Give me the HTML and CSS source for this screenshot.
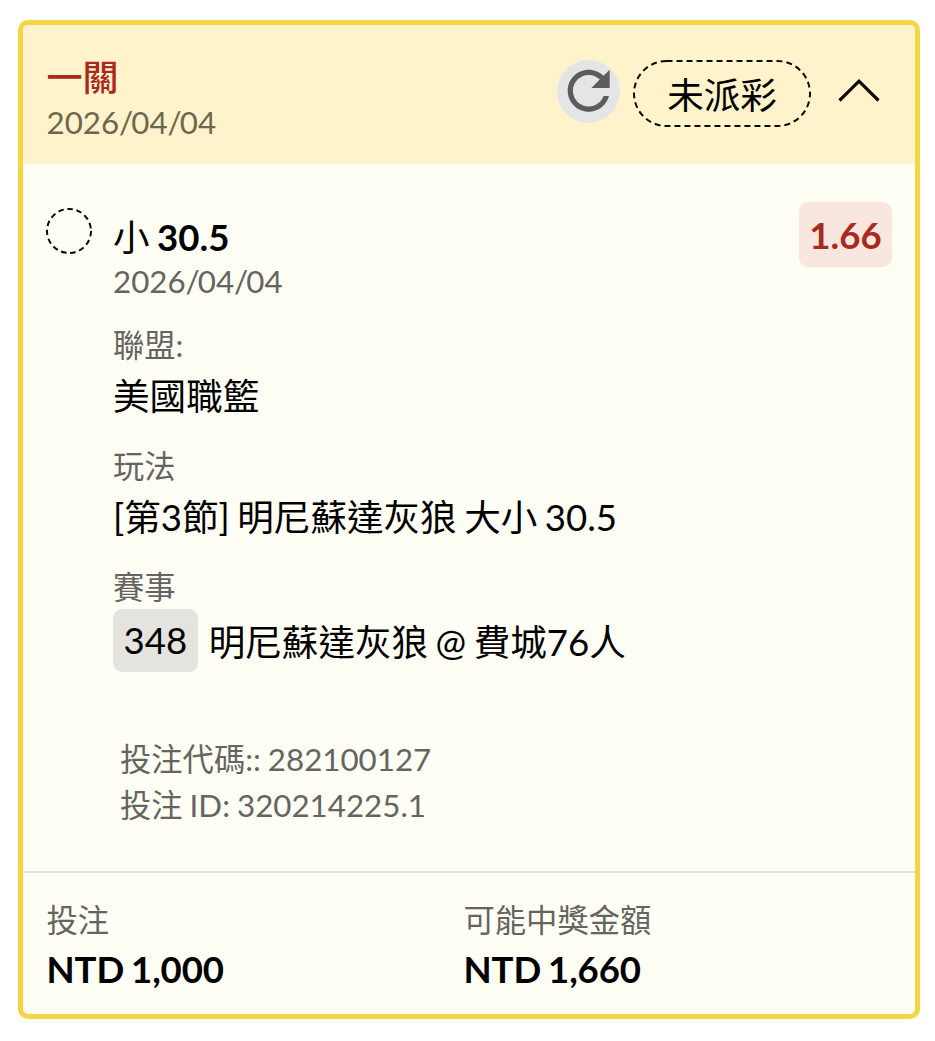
FILE: index.html
```html
<!DOCTYPE html>
<html lang="zh-Hant">
<head>
<meta charset="utf-8">
<title>一關</title>
<link rel="stylesheet" href="styles.css">
</head>
<body>
<article class="ticket">
  <header class="head">
    <div class="head-text">
      <h1 class="title">一關</h1>
      <div class="small">2026<i>/</i>04<i>/</i>04</div>
    </div>
    <button class="refresh" aria-label="refresh">
      <svg width="63" height="63" viewBox="0 0 63 63"><path transform="translate(.2 -.8) scale(2.625)" d="M17.65 6.35C16.2 4.9 14.21 4 12 4c-4.420 0-7.990 3.580-7.990 8s3.570 8 7.990 8c3.730 0 6.840-2.550 7.730-6h-2.080c-.82 2.330-3.040 4-5.650 4-3.310 0-6-2.690-6-6s2.690-6 6-6c1.660 0 3.140.69 4.220 1.780L13 11h7V4l-2.350 2.350z" fill="#5c5c5c"/></svg>
    </button>
    <div class="status">
      <svg class="dash" width="178" height="67" viewBox="0 0 178 67"><rect x="1" y="1" width="176" height="65" rx="32.500"/></svg>
      <span>未派彩</span>
    </div>
    <svg class="chevron" width="42" height="26" viewBox="0 0 42 26"><path d="M1.500 23.500L21 4.200L40.500 23.500" fill="none" stroke="#0c0a05" stroke-width="3.2"/></svg>
  </header>
  <section class="body">
    <svg class="ring" width="46" height="46" viewBox="0 0 46 46"><circle cx="23" cy="23" r="22"/></svg>
    <div class="details">
      <div class="pick">小 <b>30.5</b></div>
      <div class="small">2026<i>/</i>04<i>/</i>04</div>
      <dl class="facts">
        <div class="fact"><dt class="small">聯盟:</dt><dd class="value">美國職籃</dd></div>
        <div class="fact"><dt class="small">玩法</dt><dd class="value">[第3節] 明尼蘇達灰狼 大小 30.5</dd></div>
        <div class="fact"><dt class="small">賽事</dt><dd class="match"><span class="chip">348</span><span class="teams">明尼蘇達灰狼 @ 費城76人</span></dd></div>
      </dl>
      <div class="codes small">
        <div>投注代碼:: 282100127</div>
        <div>投注 ID: 320214225.1</div>
      </div>
    </div>
    <div class="odds">1.66</div>
  </section>
  <footer class="foot">
    <div><div class="small">投注</div><div class="amount">NTD 1,000</div></div>
    <div><div class="small">可能中獎金額</div><div class="amount">NTD 1,660</div></div>
  </footer>
</article>
</body>
</html>
```
FILE: styles.css
```css
* { box-sizing: border-box; }
body {
  margin: 0;
  padding: 20px 15px 22px 18px;
  background: #fff;
  color: #000;
  font-family: Lato, "Noto Sans CJK TC", sans-serif;
  font-size: 36.6px;
  word-spacing: -1.9px;
  white-space: nowrap;
}
.ticket {
  height: 999px;
  border: 5px solid #f4d644;
  border-radius: 10px;
  background: #fffef5;
  overflow: hidden;
}
.head {
  display: flex;
  align-items: flex-start;
  height: 139px;
  padding: 30px 35px 0 23.5px;
  background: #fff3cb;
}
.head-text { flex: 1; }
.title {
  margin: 0;
  color: #a82a1c;
  font-size: 36px;
  font-weight: 500;
  line-height: 44px;
}
.small {
  color: #666460;
  font-size: 31.3px;
  line-height: 46px;
  word-spacing: -1px;
}
.small i {
  font-style: normal;
  letter-spacing: -2px;
}
.head .small { color: #6f664d; }
.refresh {
  width: 63px;
  height: 63px;
  margin: 5px 13px 0 0;
  padding: 0;
  border: 0;
  border-radius: 50%;
  background: #e4e5e7;
}
.refresh svg { display: block; }
.status {
  display: grid;
  grid-template: 67px / 178px;
  justify-items: center;
  margin-top: 5px;
  line-height: 70px;
}
.status > * { grid-area: 1 / 1; }
.dash rect, .ring circle {
  fill: none;
  stroke: #0c0a05;
  stroke-width: 2;
  stroke-dasharray: 6 4;
}
.chevron { margin: 22px 0 0 27px; }
.body {
  display: flex;
  align-items: flex-start;
  height: 707px;
  padding: 38px 23px 0;
}
.ring { margin: 6px 21px 0 0; }
.ring circle { stroke-dasharray: 5.5 3.715; }
.details {
  flex: 1;
  padding-top: 12px;
}
.pick {
  padding-top: 2px;
  line-height: 42px;
}
.pick b { font-weight: 700; }
.facts { margin: 18px 0 0; }
.fact + .fact { margin-top: 19px; }
.fact:last-child dt { height: 45px; }
dd { margin: 0; }
.value { line-height: 56px; }
.match {
  display: flex;
  align-items: center;
  gap: 11px;
  height: 63px;
}
.chip {
  padding: 0 10.5px;
  border-radius: 9px;
  background: #e5e3de;
  line-height: 63px;
}
.teams { line-height: 59px; padding-top: 4px; }
.codes { margin: 64px 0 0 7px; }
.odds {
  width: 93px;
  height: 65px;
  border-radius: 9px;
  background: #f8e6df;
  color: #a82a1c;
  font-weight: 700;
  line-height: 66px;
  text-align: center;
}
.foot {
  display: grid;
  grid-template-columns: 417px 1fr;
  padding: 24px 23.5px 0;
  border-top: 2px solid #e4e2dc;
}
.amount {
  font-weight: 700;
  letter-spacing: -0.1px;
  line-height: 52px;
}
```
